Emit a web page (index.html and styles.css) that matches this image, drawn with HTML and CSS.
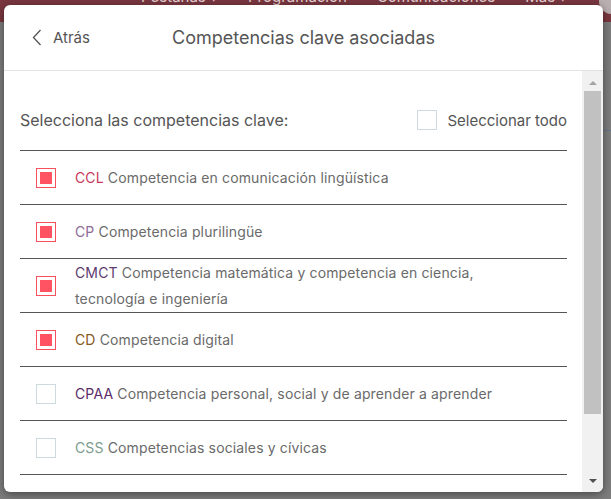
FILE: index.html
```html
<!DOCTYPE html>
<html lang="es">
<head>
  <meta charset="UTF-8">
  <title>Competencias clave asociadas</title>
  <link rel="stylesheet" href="styles.css">
</head>
<body>
  <div class="topbar">
    <nav class="topnav">
      <span>Pestañas &#9662;</span>
      <span>Programación</span>
      <span>Comunicaciones</span>
      <span>Más &#9662;</span>
    </nav>
    <div class="avatar"></div>
  </div>
  <div class="page-line"></div>

  <div class="modal">
    <header class="modal-header">
      <a class="back">
        <svg width="10" height="17" viewBox="0 0 10 17">
          <path d="M8.5 1 L1.5 8.5 L8.5 16" fill="none" stroke="#555" stroke-width="1.3"/>
        </svg>
        Atrás
      </a>
      <h2 class="modal-title">Competencias clave asociadas</h2>
      <span></span>
    </header>

    <div class="modal-body">
      <div class="content">
        <div class="list-head">
          <span class="list-title">Selecciona las competencias clave:</span>
          <label class="select-all"><span class="box"></span> Seleccionar todo</label>
        </div>

        <ul class="comp-list">
          <li class="comp">
            <span class="box checked"></span>
            <span class="comp-text"><b class="ccl">CCL</b> Competencia en comunicación lingüística</span>
          </li>
          <li class="comp">
            <span class="box checked"></span>
            <span class="comp-text"><b class="cp">CP</b> Competencia plurilingüe</span>
          </li>
          <li class="comp">
            <span class="box checked"></span>
            <span class="comp-text"><b class="cmct">CMCT</b> Competencia matemática y competencia en ciencia, tecnología e ingeniería</span>
          </li>
          <li class="comp">
            <span class="box checked"></span>
            <span class="comp-text"><b class="cd">CD</b> Competencia digital</span>
          </li>
          <li class="comp">
            <span class="box"></span>
            <span class="comp-text"><b class="cpaa">CPAA</b> Competencia personal, social y de aprender a aprender</span>
          </li>
          <li class="comp">
            <span class="box"></span>
            <span class="comp-text"><b class="css">CSS</b> Competencias sociales y cívicas</span>
          </li>
          <li class="comp">
            <span class="box"></span>
            <span class="comp-text"><b class="cec">CEC</b> Conciencia y expresiones culturales</span>
          </li>
        </ul>
      </div>

      <div class="scrollbar">
        <span class="arrow up"></span>
        <div class="track"><div class="thumb"></div></div>
        <span class="arrow down"></span>
      </div>
    </div>
  </div>
</body>
</html>
```

FILE: styles.css
```css
html, body {
  margin: 0;
  height: 100%;
}

body {
  font-family: Inter, "Liberation Sans", sans-serif;
  background: #7d7d7d;
  overflow: hidden;
}

.topbar {
  height: 22px;
  background: #7a3740;
  position: relative;
  overflow: hidden;
}

.topnav {
  display: flex;
  gap: 30px;
  padding-left: 141px;
  margin-top: -13px;
  font-size: 15px;
  color: #e6d2d5;
}

.avatar {
  position: absolute;
  right: -14px;
  top: -12px;
  width: 26px;
  height: 26px;
  border-radius: 50%;
  background: #b9aeb0;
}

.page-line {
  margin: 108px 0 0 auto;
  width: 10px;
  height: 1px;
  background: #66758c;
}

.modal {
  position: absolute;
  left: 4px;
  top: 5px;
  width: 599px;
  height: 487px;
  background: #fff;
  border-radius: 6px;
  box-shadow: 0 2px 8px rgba(0, 0, 0, 0.45);
  display: flex;
  flex-direction: column;
  overflow: hidden;
}

.modal-header {
  height: 65px;
  border-bottom: 1px solid #e3e3e3;
  display: grid;
  grid-template-columns: 1fr auto 1fr;
  align-items: center;
  flex-shrink: 0;
}

.back {
  display: flex;
  align-items: center;
  gap: 11px;
  padding-left: 28px;
  font-size: 15px;
  color: #555;
}

.modal-title {
  margin: 0;
  font-size: 18px;
  font-weight: 400;
  color: #555;
}

.modal-body {
  flex: 1;
  display: flex;
  min-height: 0;
}

.content {
  flex: 1;
  padding: 29px 15px 0 16px;
  overflow: hidden;
}

.list-head {
  height: 40px;
  margin-bottom: 10px;
  display: flex;
  align-items: center;
  justify-content: space-between;
  color: #555;
  font-size: 15px;
}

.list-title {
  font-size: 16px;
}

.select-all {
  display: flex;
  align-items: center;
  gap: 10px;
}

.box {
  width: 20px;
  height: 20px;
  box-sizing: border-box;
  border: 1px solid #cddadd;
  flex-shrink: 0;
}

.box.checked {
  border-color: #f8505f;
  padding: 3px;
}

.box.checked::after {
  content: "";
  display: block;
  width: 12px;
  height: 12px;
  background: #ff5262;
}

.comp-list {
  list-style: none;
  margin: 0;
  padding: 0;
  border-top: 1px solid #555;
}

.comp {
  min-height: 53px;
  border-bottom: 1px solid #555;
  display: flex;
  align-items: center;
  gap: 19px;
  padding: 0 40px 0 16px;
  font-size: 14px;
  letter-spacing: 0.14px;
  line-height: 26px;
  color: #6a6a6a;
}

.comp b {
  font-weight: 400;
}

.ccl { color: #c83a5c; }
.cp { color: #8d6b96; }
.cmct { color: #5d3b6e; }
.cd { color: #875a1d; }
.cpaa { color: #5b2c6b; }
.css { color: #7d9d8e; }
.cec { color: #4b7a8c; }

.scrollbar {
  width: 21px;
  background: #f1f1f1;
  display: flex;
  flex-direction: column;
  align-items: center;
}

.arrow {
  width: 0;
  height: 0;
  border-left: 4px solid transparent;
  border-right: 4px solid transparent;
}

.arrow.up {
  margin: 10px 0 6px;
  border-bottom: 4px solid #a3a3a3;
}

.arrow.down {
  margin: 0 0 9px;
  border-top: 4px solid #505050;
}

.track {
  flex: 1;
  width: 100%;
  padding: 0 2px;
  box-sizing: border-box;
}

.thumb {
  height: 323px;
  background: #c1c1c1;
}
```
